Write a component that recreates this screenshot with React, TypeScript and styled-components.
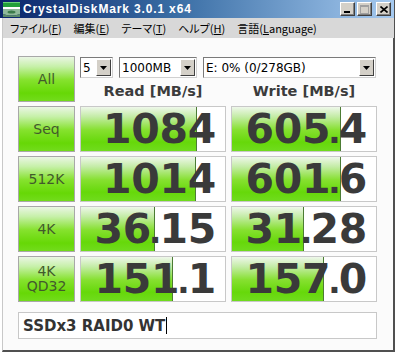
import { Fragment } from "react";
import styled, { createGlobalStyle } from "styled-components";

const GlobalStyle = createGlobalStyle`
  html, body {
    margin: 0;
    padding: 0;
    background: #ffffff;
  }
  * {
    box-sizing: border-box;
  }
`;

const rows = [
  { label: ["Seq"], read: "1084", write: "605.4" },
  { label: ["512K"], read: "1014", write: "601.6" },
  { label: ["4K"], read: "36.15", write: "31.28" },
  { label: ["4K", "QD32"], read: "151.1", write: "157.0" },
];

// meter is logarithmic: 0.1 MB/s .. 10000 MB/s over the full width
const meterPercent = (value: string) => (Math.log10(parseFloat(value) * 10) / 5) * 100;

const menuItems = [
  { text: "ファイル(", key: "F", after: ")" },
  { text: "編集(", key: "E", after: ")" },
  { text: "テーマ(", key: "T", after: ")" },
  { text: "ヘルプ(", key: "H", after: ")" },
  { text: "言語(", key: "L", after: "anguage)" },
];

const Window = styled.div`
  width: 393px;
  height: 352px;
  background: #fbfbfb;
  border-left: 1px solid #c8c8c8;
  border-right: 2px solid #505050;
  border-bottom: 2px solid #505050;
  margin-left: 2px;
  display: flex;
  flex-direction: column;
`;

const TitleBar = styled.div`
  height: 18px;
  margin-left: -3px;
  margin-right: -1px;
  background: linear-gradient(to right, #0a246a 0%, #3a6ea5 45%, #a6caf0 100%);
  display: flex;
  align-items: center;
  padding: 0 3px;
`;

const Title = styled.div`
  flex: 1;
  margin-left: 3px;
  color: #ffffff;
  font-family: "Liberation Sans", Arial, sans-serif;
  font-weight: bold;
  font-size: 12px;
  letter-spacing: 0.85px;
`;

const CaptionButtons = styled.div`
  display: flex;
  gap: 2px;
`;

const CaptionButton = styled.div<{ $gap?: boolean }>`
  width: 15px;
  height: 14px;
  margin-left: ${(p) => (p.$gap ? "2px" : "0")};
  background: #d4d0c8;
  border-top: 1px solid #ffffff;
  border-left: 1px solid #ffffff;
  border-right: 1px solid #404040;
  border-bottom: 1px solid #404040;
  box-shadow: inset -1px -1px 0 #808080;
  display: flex;
  align-items: center;
  justify-content: center;
`;

const MenuBar = styled.div`
  height: 20px;
  background: #d8d8d8;
  display: flex;
  align-items: center;
  padding-left: 7px;
  gap: 12px;
  font-family: "Noto Sans CJK JP", sans-serif;
  font-feature-settings: "palt" 1;
  font-size: 11px;
  color: #000000;
  margin-right: -1px;
`;

const MenuItem = styled.span`
  white-space: nowrap;
`;

const Mnemonic = styled.span`
  text-decoration: underline;
`;

const Client = styled.div`
  flex: 1;
  padding: 18px 0 0 15px;
  display: flex;
  flex-direction: column;
`;

const Grid = styled.div`
  display: grid;
  grid-template-columns: 57px 146px 146px;
  column-gap: 5px;
  row-gap: 4px;
`;

const LabelButton = styled.div`
  height: 46px;
  border: 1px solid #a8a8a8;
  background: linear-gradient(
    to bottom,
    #eaf6e4 0%,
    #c6f0a8 22%,
    #86e22e 52%,
    #66d806 82%,
    #72dc1c 100%
  );
  display: flex;
  flex-direction: column;
  align-items: center;
  justify-content: center;
  font-family: "DejaVu Sans", sans-serif;
  font-size: 14px;
  line-height: 15px;
  color: #425a2c;
`;

const Controls = styled.div`
  grid-column: 2 / 4;
  display: flex;
  flex-direction: column;
  padding-top: 1px;
`;

const Selects = styled.div`
  display: flex;
  gap: 6px;
`;

const Select = styled.div<{ $w: number }>`
  width: ${(p) => p.$w}px;
  height: 21px;
  background: #ffffff;
  border: 1px solid #7a7a7a;
  border-right-color: #d0d0d0;
  border-bottom-color: #d0d0d0;
  display: flex;
  align-items: center;
  font-family: "DejaVu Sans", sans-serif;
  font-size: 12px;
  color: #000000;
  padding-left: 2px;
`;

const SelectText = styled.span`
  flex: 1;
  white-space: nowrap;
`;

const SelectArrow = styled.div`
  width: 15px;
  height: 17px;
  margin-right: 1px;
  background: #d4d0c8;
  border-top: 1px solid #ffffff;
  border-left: 1px solid #ffffff;
  border-right: 1px solid #404040;
  border-bottom: 1px solid #404040;
  display: flex;
  align-items: center;
  justify-content: center;
`;

const Headers = styled.div`
  display: grid;
  grid-template-columns: 146px 146px;
  column-gap: 5px;
  margin-top: 2px;
`;

const Header = styled.div`
  text-align: center;
  font-family: "DejaVu Sans", sans-serif;
  font-weight: bold;
  font-size: 14.5px;
  line-height: 22px;
  color: #3c3c3c;
`;

const Result = styled.div`
  position: relative;
  height: 46px;
  border: 1px solid #c8c8c8;
  background: #ffffff;
  overflow: hidden;
`;

const Fill = styled.div`
  position: absolute;
  left: 0;
  top: 0;
  bottom: 0;
  border-right: 1px solid #4c7c34;
  background: linear-gradient(
    to bottom,
    #eef7ea 0%,
    #c4eca6 22%,
    #86e030 52%,
    #66d80a 80%,
    #70dc1e 100%
  );
`;

const Value = styled.div`
  position: relative;
  height: 100%;
  display: flex;
  align-items: center;
  justify-content: flex-end;
  padding-right: 9px;
  font-family: "DejaVu Sans", sans-serif;
  font-weight: bold;
  font-size: 41px;
  letter-spacing: -0.3px;
  color: #3a3a3a;
  white-space: nowrap;
`;

const Dot = styled.span`
  font-family: "Liberation Sans", Arial, sans-serif;
  margin: 0 -1px 0 -1.5px;
`;

const Comment = styled.div`
  width: 359px;
  height: 27px;
  margin-top: 10px;
  background: #ffffff;
  border: 1px solid #c8c8c8;
  display: flex;
  align-items: center;
  padding-left: 4px;
  font-family: "DejaVu Sans", sans-serif;
  font-weight: bold;
  font-size: 15px;
  color: #333333;
`;

const Caret = styled.span`
  width: 1px;
  height: 17px;
  background: #000000;
  margin-left: 1px;
`;

const AppIcon = () => (
  <svg width="17" height="15" viewBox="0 0 17 15">
    <rect x="0" y="0" width="17" height="5" fill="#22a03a" />
    <rect x="0" y="0" width="17" height="1" fill="#6ad07a" />
    <rect x="0" y="5" width="17" height="2" fill="#ffffff" />
    <path d="M0 7 H17 V12 Q8.5 15 0 12 Z" fill="#8fb89a" />
    <ellipse cx="8.5" cy="10" rx="4" ry="1.6" fill="#3c7a4a" />
    <path d="M0 12 Q8.5 15 17 12 V15 H0 Z" fill="#5a8a66" />
  </svg>
);

const Arrow = () => (
  <svg width="7" height="4" viewBox="0 0 7 4">
    <path d="M0 0 H7 L3.5 4 Z" fill="#000000" />
  </svg>
);

const ResultValue = ({ value }: { value: string }) => {
  const [intPart, decPart] = value.split(".");
  return (
    <Result>
      <Fill style={{ width: `${meterPercent(value)}%` }} />
      <Value>
        {intPart}
        {decPart !== undefined && (
          <>
            <Dot>.</Dot>
            {decPart}
          </>
        )}
      </Value>
    </Result>
  );
};

const App = () => {
  return (
    <>
      <GlobalStyle />
      <Window>
        <TitleBar>
          <AppIcon />
          <Title>CrystalDiskMark 3.0.1 x64</Title>
          <CaptionButtons>
            <CaptionButton>
              <svg width="7" height="8" viewBox="0 0 7 8">
                <rect x="0" y="6" width="6" height="2" fill="#000" />
              </svg>
            </CaptionButton>
            <CaptionButton>
              <svg width="9" height="9" viewBox="0 0 9 9">
                <rect x="0.5" y="0.5" width="8" height="8" fill="none" stroke="#a0a0a0" />
                <rect x="0" y="0" width="9" height="2" fill="#a0a0a0" />
              </svg>
            </CaptionButton>
            <CaptionButton $gap>
              <svg width="8" height="7" viewBox="0 0 8 7">
                <path d="M0.5 0.5 L7.5 6.5 M7.5 0.5 L0.5 6.5" stroke="#000" strokeWidth="1.6" />
              </svg>
            </CaptionButton>
          </CaptionButtons>
        </TitleBar>
        <MenuBar>
          {menuItems.map((m) => (
            <MenuItem key={m.text}>
              {m.text}
              <Mnemonic>{m.key}</Mnemonic>
              {m.after}
            </MenuItem>
          ))}
        </MenuBar>
        <Client>
          <Grid>
            <LabelButton>All</LabelButton>
            <Controls>
              <Selects>
                <Select $w={33}>
                  <SelectText>5</SelectText>
                  <SelectArrow>
                    <Arrow />
                  </SelectArrow>
                </Select>
                <Select $w={78}>
                  <SelectText>1000MB</SelectText>
                  <SelectArrow>
                    <Arrow />
                  </SelectArrow>
                </Select>
                <Select $w={173}>
                  <SelectText>E: 0% (0/278GB)</SelectText>
                  <SelectArrow>
                    <Arrow />
                  </SelectArrow>
                </Select>
              </Selects>
              <Headers>
                <Header>Read [MB/s]</Header>
                <Header>Write [MB/s]</Header>
              </Headers>
            </Controls>
            {rows.map((r) => (
              <Fragment key={r.label.join()}>
                <LabelButton>
                  {r.label.map((l) => (
                    <span key={l}>{l}</span>
                  ))}
                </LabelButton>
                <ResultValue value={r.read} />
                <ResultValue value={r.write} />
              </Fragment>
            ))}
          </Grid>
          <Comment>
            SSDx3 RAID0 WT
            <Caret />
          </Comment>
        </Client>
      </Window>
    </>
  );
};

export default App;
